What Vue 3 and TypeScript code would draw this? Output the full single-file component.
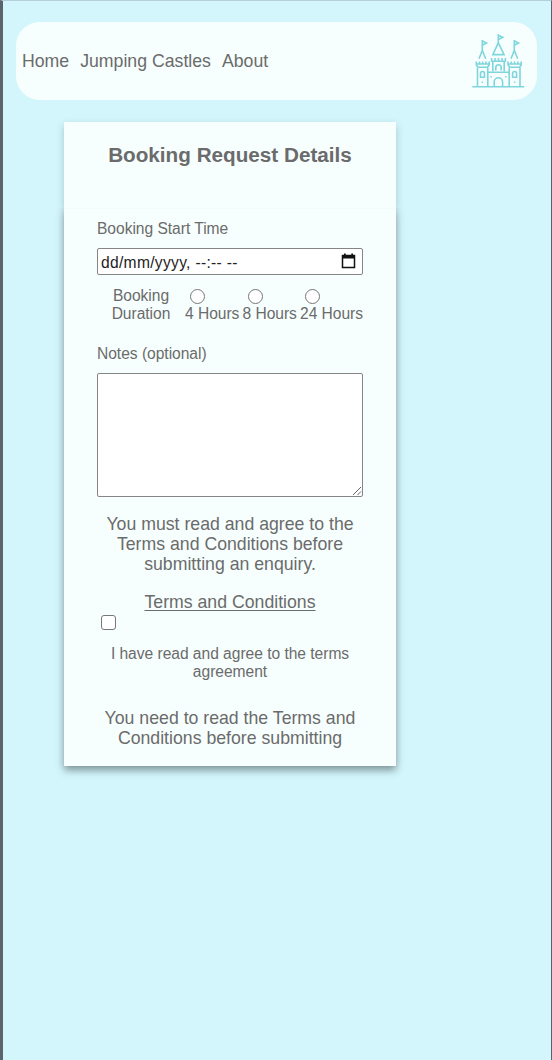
<script setup lang="ts">
import { ref } from 'vue'

const links: string[] = ['Home', 'Jumping Castles', 'About']
const durations: string[] = ['4 Hours', '8 Hours', '24 Hours']
const duration = ref<string>('')
const notes = ref<string>('')
const agreed = ref<boolean>(false)
</script>

<template>
  <div class="page">
    <nav class="nav">
      <a v-for="link in links" :key="link" class="link">{{ link }}</a>
      <svg class="logo" viewBox="0 0 54 56" fill="none" stroke="currentColor" stroke-width="1.6">
        <path d="M.3 53.7H52.3" />
        <path d="M5.5 53.5V34.5M15.8 53.5V34.5M37.2 53.5V34.5M48 53.5V34.5" />
        <path d="M4.3 28.5V32L6 34.3H15.5L17.2 32V28.5M4.3 31H17.2M7.5 28.5V31M10.7 28.5V31M13.9 28.5V31" />
        <path d="M36 28.5V32L37.7 34.3H47.5L49.2 32V28.5M36 31H49.2M39.3 28.5V31M42.6 28.5V31M45.9 28.5V31" />
        <path d="M7 25.8L10.3 17.5L13.7 25.8M39 25.8L42.3 17.5L45.7 25.8M10.3 17.5V7M42.3 17.5V7" />
        <path d="M10.3 8L14.5 10L10.3 12.2M42.3 8L46.5 10L42.3 12.2M26.3 2.3L30.7 4.3L26.3 6.5" />
        <path d="M26.3 1.3V10M26.3 9.8L20.8 21.6H32.1Z" />
        <path d="M19.6 25V28.2H33.4V25M23 25V28M26.5 25V28M30 25V28M20.8 28V38.5M32.2 28V38.5" />
        <path d="M23.8 37.5V34.5A2.7 2.7 0 0 1 29.2 34.5V37.5M16 39.2H37" />
        <path d="M22.2 53.5V49A4.2 4.2 0 0 1 30.6 49V53.5" />
        <path d="M8.5 44.3V40.5A2 2 0 0 1 12.5 40.5V44.3ZM40.6 44.3V40.5A2 2 0 0 1 44.6 40.5V44.3Z" />
        <path d="M9.7 49.3H11.1M18.4 43.7H19.8M33.1 43.7H34.5M42 49.3H43.4" />
      </svg>
    </nav>

    <main class="booking">
      <header class="head"><h1>Booking Request Details</h1></header>
      <form class="form" @submit.prevent>
        <span class="label">Booking Start Time</span>
        <div class="date">
          <span class="placeholder">dd/mm/yyyy, --:-- --</span>
          <svg class="calendar" viewBox="0 0 15 16">
            <path d="M1.5 2.5H13.5V14.5H1.5Z" fill="none" stroke="#111" stroke-width="1.5" />
            <path d="M1 2H14V5.5H1ZM3 .5H4.7V3H3ZM10.3 .5H12V3H10.3Z" fill="#111" />
          </svg>
        </div>
        <div class="durations">
          <span class="caption">Booking Duration</span>
          <label v-for="item in durations" :key="item" class="option">
            <input v-model="duration" class="radio" type="radio" name="duration" :value="item" />
            <span>{{ item }}</span>
          </label>
        </div>
        <label class="label notes-label" for="notes">Notes (optional)</label>
        <div class="notes-wrap">
          <textarea id="notes" v-model="notes" class="notes"></textarea>
          <svg class="grip" viewBox="0 0 10 10"><path d="M1 9L9 1M5.5 9L9 5.5" stroke="#666" stroke-width="1" /></svg>
        </div>
        <p class="text intro">You must read and agree to the<br />Terms and Conditions before<br />submitting an enquiry.</p>
        <a class="text terms">Terms and Conditions</a>
        <input id="agree" v-model="agreed" class="check" type="checkbox" />
        <label class="agree" for="agree">I have read and agree to the terms<br />agreement</label>
        <p class="text warning">You need to read the Terms and<br />Conditions before submitting</p>
      </form>
    </main>
  </div>
</template>

<style>
body { margin: 0; }
</style>

<style scoped>
.page {
  box-sizing: border-box;
  height: 1060px;
  padding: 21px 13px 0;
  border-top: 1px solid #b4cfd9;
  border-left: 3px solid #5b646d;
  border-right: 1px solid #56636b;
  background: #d3f6fd;
  color: #6b6b6b;
  font-family: "Liberation Sans", Arial, sans-serif;
  overflow: hidden;
}
.nav {
  box-sizing: border-box;
  display: flex;
  align-items: center;
  gap: 11px;
  height: 77.5px;
  width: 521px;
  padding: 0 11px 0 6px;
  border-radius: 24px;
  background: #f7fffe;
  font-size: 17.7px;
}
.link {
  padding-top: 2px;
  white-space: nowrap;
}
.logo {
  width: 54px;
  height: 56px;
  margin-left: auto;
  color: #7fd5dc;
}
.booking {
  width: 332px;
  margin: 22.5px 0 0 48px;
}
.head {
  box-sizing: border-box;
  height: 86px;
  padding-top: 21px;
  background: #f7fffe;
  box-shadow: 0 3px 8px rgba(0, 0, 0, 0.2);
  text-align: center;
}
h1 {
  margin: 0;
  font-size: 20.7px;
  line-height: 24px;
  white-space: nowrap;
}
.form {
  box-sizing: border-box;
  display: flex;
  flex-direction: column;
  height: 558px;
  padding: 11px 33px 0;
  background: #f7fffe;
  box-shadow: 0 4px 8px rgba(0, 0, 0, 0.42);
  clip-path: inset(0 -20px -20px -20px);
  border-top: 1px solid #f2fafa;
  font-size: 15.6px;
  letter-spacing: -0.03px;
  line-height: 18px;
}
.date {
  box-sizing: border-box;
  display: flex;
  align-items: center;
  justify-content: space-between;
  height: 27px;
  margin-top: 10px;
  padding: 2px 6px 0 3px;
  border: 1px solid #858585;
  border-radius: 2px;
  background: #fff;
  color: #222;
}
.placeholder { letter-spacing: 0.31px; }
.calendar { width: 15px; height: 16px; margin-top: -3px; }
.durations {
  display: flex;
  height: 36px;
  margin: 12px 0 0 14px;
  white-space: nowrap;
}
.caption {
  width: 60px;
  margin-right: 14px;
  text-align: center;
  white-space: normal;
}
.option {
  display: flex;
  flex-direction: column;
  width: 57.5px;
}
.radio, .check {
  appearance: none;
  box-sizing: border-box;
  width: 15px;
  height: 15px;
  border: 1px solid #777;
  background: #fff;
}
.radio {
  flex: none;
  margin: 2px 0 1px 5px;
  border-radius: 50%;
}
.notes-label { margin-top: 22px; }
.notes-wrap {
  position: relative;
  height: 124px;
  margin-top: 10px;
}
.notes {
  display: block;
  box-sizing: border-box;
  width: 100%;
  height: 124px;
  border: 1px solid #858585;
  border-radius: 2px;
  background: #fff;
  resize: none;
}
.grip {
  position: absolute;
  right: 1px;
  bottom: 1px;
  width: 10px;
  height: 10px;
}
.text {
  margin: 0;
  font-size: 17.7px;
  letter-spacing: 0;
  line-height: 20px;
  text-align: center;
  white-space: nowrap;
}
.intro { margin-top: 17px; }
.terms {
  margin-top: 18px;
  text-decoration: underline;
  text-decoration-thickness: 1px;
  text-underline-offset: 2px;
}
.check {
  margin: 3px 0 0 4px;
  border-radius: 3px;
}
.agree {
  margin-top: 15px;
  text-align: center;
  white-space: nowrap;
}
.warning { margin-top: 27px; }
</style>
